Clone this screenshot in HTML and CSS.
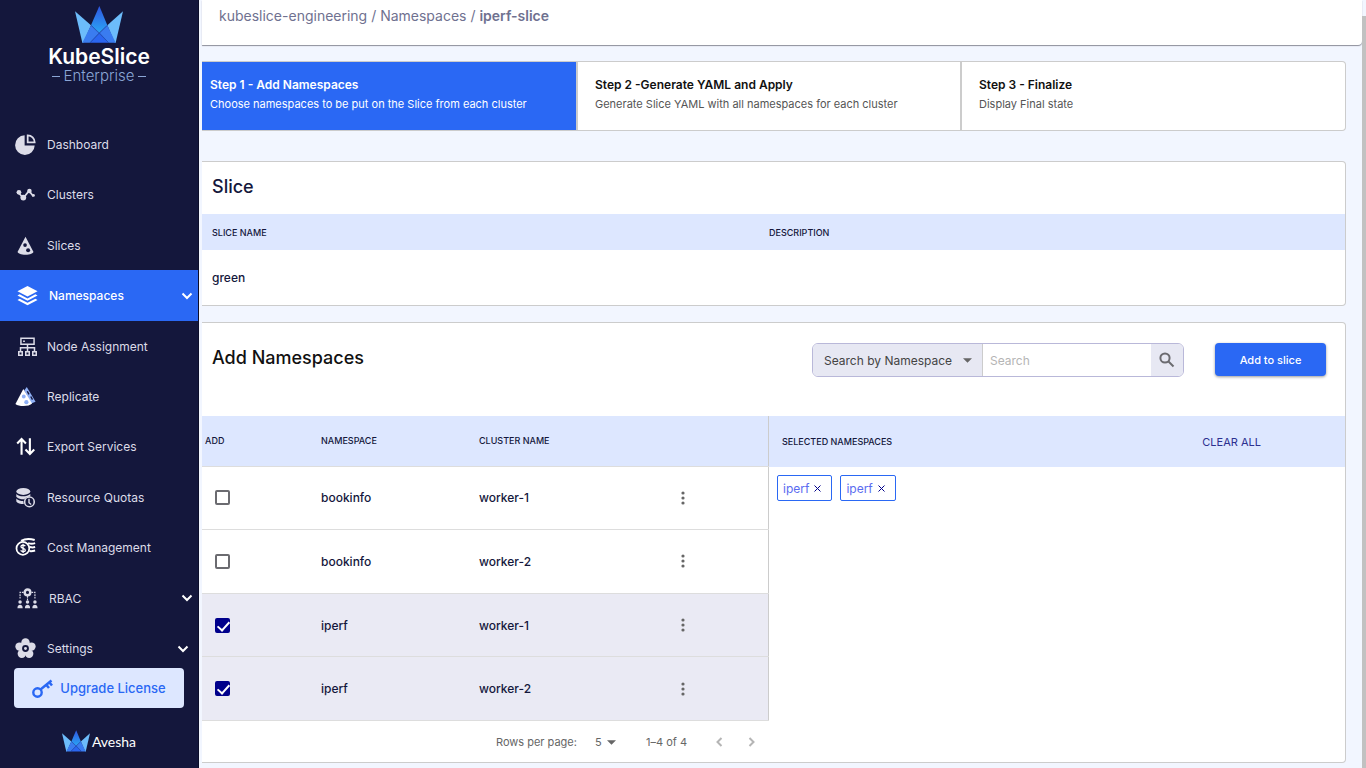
FILE: index.html
```html
<!DOCTYPE html>
<html lang="en">
<head>
    <meta charset="utf-8">
    <title>KubeSlice Enterprise - Namespaces</title>
    <link rel="stylesheet" href="styles.css">
</head>
<body>
    <!-- shared crown, used by both logos -->
    <svg class="defs" width="0" height="0" aria-hidden="true">
        <defs>
            <linearGradient id="peak" x1="0" y1="0" x2="0" y2="1">
                <stop offset="0" stop-color="#2f55e0"/>
                <stop offset="1" stop-color="#2aa5f5"/>
            </linearGradient>
            <symbol id="crown" viewBox="0 0 144 111">
                <path d="M0 16 48 58 25 110h-3z" fill="#6cbcfb"/>
                <path d="M144 16 97 58l22 52h3z" fill="#6cbcfb"/>
                <path d="M73 0 97 58 73 80 48 58z" fill="url(#peak)"/>
                <path d="M48 58 73 80 45 110H22z" fill="#3a7cf0"/>
                <path d="M97 58 73 80l28 30h21z" fill="#3a7cf0"/>
                <path d="M73 80 101 110H45z" fill="#2b66f0"/>
                <path d="M48 58 101 110M97 58 45 110" stroke="#2450b4" stroke-width="2" fill="none"/>
            </symbol>
        </defs>
    </svg>

    <aside class="sidebar">
        <div class="brand">
            <svg class="brand-crown"><use href="#crown"/></svg>
            <div class="brand-name">KubeSlice</div>
            <div class="brand-edition">Enterprise</div>
        </div>

        <nav class="nav">
            <a class="nav-item" href="#">
                <svg class="icon" viewBox="0 0 24 24"><path d="M11 1.500v11.500h11.500A11.200 11.200 0 1 1 11 1.500z" fill="#dcdce8"/><path d="M14.500 1.500v8h8a8 8 0 0 0-8-8z" fill="none" stroke="#dcdce8" stroke-width="2"/></svg>
                <span>Dashboard</span>
            </a>
            <a class="nav-item" href="#">
                <svg class="icon" viewBox="0 0 24 24"><path d="M4 10 9.500 16 16 8l5 6" fill="none" stroke="#dcdce8" stroke-width="2"/><g fill="#dcdce8"><circle cx="4.500" cy="9.500" r="2.700"/><circle cx="9.500" cy="15.500" r="3.300"/><circle cx="16.500" cy="8" r="2.600"/><circle cx="21" cy="13" r="1.700"/></g></svg>
                <span>Clusters</span>
            </a>
            <a class="nav-item" href="#">
                <svg class="icon" viewBox="0 0 24 24"><path d="M12 2 21 19c.500 1.500-4 3.500-9 3.500S2.500 20.500 3 19z" fill="#dcdce8"/><g fill="#14173c"><circle cx="11.500" cy="11.500" r="2.100"/><circle cx="15" cy="17.500" r="2.300"/></g></svg>
                <span>Slices</span>
            </a>
            <a class="nav-item has-menu active" href="#">
                <svg class="icon" viewBox="0 0 24 24" fill="#fff"><path d="M12 1 23.500 7 12 13 .500 7z"/><path d="m.500 12 2.500-1.300 9 4.700 9-4.700 2.500 1.300-11.500 6z"/><path d="m.500 17 2.500-1.300 9 4.700 9-4.700 2.500 1.300-11.500 6z"/></svg>
                <span>Namespaces</span>
                <svg class="chevron" viewBox="0 0 12 8"><path d="m1.500 1.500 4.500 4.500 4.500-4.500"/></svg>
            </a>
            <a class="nav-item wide" href="#">
                <svg class="icon" viewBox="0 0 24 24" fill="none" stroke="#dcdce8" stroke-width="1.700"><path d="M4.500 2.500h15v7h-15zM12 9.500v8M4 17.500v-4h16v4M7 6h2"/><path d="M2 18h4v4H2zM10 18h4v4h-4zM18 18h4v4h-4z"/></svg>
                <span>Node Assignment</span>
            </a>
            <a class="nav-item" href="#">
                <svg class="icon" viewBox="0 0 24 24"><path d="M13.500 1 23.500 18l-5 2-8-15z" fill="#8fb0f5"/><path d="M9.500 3.500 19.500 20c-3 3.500-15 4-19 .500z" fill="#fff"/><g fill="#8fb0f5"><circle cx="10" cy="12" r="2.200"/><circle cx="13" cy="18.500" r="2.400"/></g><path d="m14 6 2 3.500M18 12l2 3.500" stroke="#14173c" stroke-width="1.600"/></svg>
                <span>Replicate</span>
            </a>
            <a class="nav-item" href="#">
                <svg class="icon" viewBox="0 0 24 24" fill="none" stroke="#fff" stroke-width="2.400"><path d="M7.500 21.500V4M2.500 8.500l5-5 5 5M17 2.500V20M12 15.500l5 5 5-5"/></svg>
                <span>Export Services</span>
            </a>
            <a class="nav-item" href="#">
                <svg class="icon" viewBox="0 0 24 24"><g fill="#dcdce8"><ellipse cx="9.500" cy="5" rx="8" ry="4"/><path d="M1.500 8c3 3.500 12 3.500 16 0v2.500c-4 1-6 2-7 3.500-4 0-7-1-9-3zM1.500 13c2 2 5 3 8 3l.500 3.500c-4 0-7-1-8.500-3z"/></g><circle cx="16.500" cy="17" r="5.500" fill="#14173c" stroke="#dcdce8" stroke-width="1.800"/><path d="M16 13.500v4.500l2.500 2" fill="none" stroke="#dcdce8" stroke-width="1.600"/></svg>
                <span>Resource Quotas</span>
            </a>
            <a class="nav-item" href="#">
                <svg class="icon" viewBox="0 0 24 24"><g fill="none" stroke="#fff" stroke-width="2.300"><path d="M7 4.500C12 1.500 18 2 22.500 3.500M15 7c3 1 5 1 8 0M17 11.500c2 .500 4 .500 6 0M16.500 16c2.500.500 4.500 0 6.500-.500"/></g><circle cx="9" cy="13" r="7.300" fill="#14173c" stroke="#fff" stroke-width="2"/><path d="M11.800 10.500C10.500 8.800 6.800 9 6.800 11c0 2.300 5 1.500 5 4 0 2-4 2.300-5.300.300M9.200 7.800v10.500" fill="none" stroke="#fff" stroke-width="1.500"/></svg>
                <span>Cost Management</span>
            </a>
            <a class="nav-item has-menu" href="#">
                <svg class="icon" viewBox="0 0 24 24"><g fill="none" stroke="#dcdce8"><circle cx="12" cy="5" r="3.200" stroke-width="2.800"/><path d="M12 9v5M7.500 5H3.500v8M16.500 5h4v8" stroke-width="1.300" stroke-dasharray="2 1"/></g><g fill="#dcdce8"><circle cx="3.500" cy="16" r="2"/><circle cx="12" cy="16" r="2"/><circle cx="20.500" cy="16" r="2"/><path d="M.500 23c0-5 6-5 6 0zM9 23c0-5 6-5 6 0zM17.500 23c0-5 6-5 6 0z"/></g></svg>
                <span>RBAC</span>
                <svg class="chevron" viewBox="0 0 12 8"><path d="m1.500 1.500 4.500 4.500 4.500-4.500"/></svg>
            </a>
            <a class="nav-item settings" href="#">
                <svg class="icon" viewBox="0 0 24 24"><g fill="#dcdce8"><circle cx="12" cy="5" r="4.800"/><circle cx="18.800" cy="9.800" r="4.800"/><circle cx="16.200" cy="18" r="4.800"/><circle cx="7.800" cy="18" r="4.800"/><circle cx="5.200" cy="9.800" r="4.800"/><circle cx="12" cy="12" r="6"/></g><circle cx="12" cy="12" r="2.800" fill="#dcdce8" stroke="#14173c" stroke-width="2.200"/></svg>
                <span>Settings</span>
                <svg class="chevron" viewBox="0 0 12 8"><path d="m1.500 1.500 4.500 4.500 4.500-4.500"/></svg>
            </a>
        </nav>

        <button class="upgrade" type="button">
            <svg class="key" viewBox="0 0 21 19" fill="none" stroke="#2a68f4"><circle cx="5.500" cy="13.500" r="4.200" stroke-width="2.400"/><path d="M8.500 10.500 19.500 1.500" stroke-width="2.400"/><path d="m14 5.500 3 3.500M17 3l3 3.500" stroke-width="2.600"/></svg>
            Upgrade License
        </button>

        <div class="vendor">
            <svg class="vendor-crown"><use href="#crown"/></svg>
            <span>Avesha</span>
        </div>
    </aside>

    <main class="main">
        <header class="topbar">
            <a href="#">kubeslice-engineering</a> / <a href="#">Namespaces</a> / <strong>iperf-slice</strong>
        </header>

        <div class="content">
            <ol class="steps">
                <li class="step current">
                    <h3>Step 1 - Add Namespaces</h3>
                    <p>Choose namespaces to be put on the Slice from each cluster</p>
                </li>
                <li class="step">
                    <h3>Step 2 -Generate YAML and Apply</h3>
                    <p>Generate Slice YAML with all namespaces for each cluster</p>
                </li>
                <li class="step">
                    <h3>Step 3 - Finalize</h3>
                    <p>Display Final state</p>
                </li>
            </ol>

            <section class="card">
                <h2 class="slice-title">Slice</h2>
                <table class="slice-table">
                    <thead>
                        <tr><th>SLICE NAME</th><th>DESCRIPTION</th></tr>
                    </thead>
                    <tbody>
                        <tr><td>green</td><td></td></tr>
                    </tbody>
                </table>
            </section>

            <section class="card namespaces">
                <div class="toolbar">
                    <h2>Add Namespaces</h2>
                    <form class="search">
                        <div class="select-wrap">
                            <select aria-label="Search by">
                                <option>Search by Namespace</option>
                            </select>
                            <svg class="caret" viewBox="0 0 10 5"><path d="M0 0h10L5 5z"/></svg>
                        </div>
                        <input type="text" placeholder="Search" aria-label="Search">
                        <button type="button" aria-label="Search">
                            <svg viewBox="0 0 16 16"><circle cx="6" cy="6" r="4.600"/><path d="m9.500 9.500 5 5"/></svg>
                        </button>
                    </form>
                    <button class="add-btn" type="button">Add to slice</button>
                </div>

                <div class="panes">
                    <div class="pane-left">
                        <table class="ns-table">
                            <thead>
                                <tr><th class="col-add">ADD</th><th class="col-ns">NAMESPACE</th><th class="col-cluster">CLUSTER NAME</th><th></th></tr>
                            </thead>
                            <tbody>
                                <tr>
                                    <td><input type="checkbox" aria-label="bookinfo on worker-1"></td>
                                    <td>bookinfo</td>
                                    <td>worker-1</td>
                                    <td><button class="more" type="button" aria-label="More"><svg viewBox="0 0 4 14"><circle cx="2" cy="2" r="1.600"/><circle cx="2" cy="7" r="1.600"/><circle cx="2" cy="12" r="1.600"/></svg></button></td>
                                </tr>
                                <tr>
                                    <td><input type="checkbox" aria-label="bookinfo on worker-2"></td>
                                    <td>bookinfo</td>
                                    <td>worker-2</td>
                                    <td><button class="more" type="button" aria-label="More"><svg viewBox="0 0 4 14"><circle cx="2" cy="2" r="1.600"/><circle cx="2" cy="7" r="1.600"/><circle cx="2" cy="12" r="1.600"/></svg></button></td>
                                </tr>
                                <tr class="selected">
                                    <td><input type="checkbox" checked aria-label="iperf on worker-1"></td>
                                    <td>iperf</td>
                                    <td>worker-1</td>
                                    <td><button class="more" type="button" aria-label="More"><svg viewBox="0 0 4 14"><circle cx="2" cy="2" r="1.600"/><circle cx="2" cy="7" r="1.600"/><circle cx="2" cy="12" r="1.600"/></svg></button></td>
                                </tr>
                                <tr class="selected">
                                    <td><input type="checkbox" checked aria-label="iperf on worker-2"></td>
                                    <td>iperf</td>
                                    <td>worker-2</td>
                                    <td><button class="more" type="button" aria-label="More"><svg viewBox="0 0 4 14"><circle cx="2" cy="2" r="1.600"/><circle cx="2" cy="7" r="1.600"/><circle cx="2" cy="12" r="1.600"/></svg></button></td>
                                </tr>
                            </tbody>
                        </table>
                        <div class="pager">
                            <label for="rows">Rows per page:</label>
                            <div class="select-wrap">
                                <select id="rows">
                                    <option>5</option>
                                </select>
                                <svg class="caret" viewBox="0 0 10 5"><path d="M0 0h10L5 5z"/></svg>
                            </div>
                            <span>1–4 of 4</span>
                            <button type="button" aria-label="Previous page"><svg viewBox="0 0 7 10"><path d="M5.500 1 1.500 5l4 4"/></svg></button>
                            <button type="button" aria-label="Next page"><svg viewBox="0 0 7 10"><path d="m1.500 1 4 4-4 4"/></svg></button>
                        </div>
                    </div>

                    <div class="pane-right">
                        <div class="pane-head">
                            <h4>SELECTED NAMESPACES</h4>
                            <button type="button">CLEAR ALL</button>
                        </div>
                        <div class="tags">
                            <span class="tag">iperf <button type="button" aria-label="Remove iperf"><svg viewBox="0 0 7 7"><path d="m.500.500 6 6M6.500.500l-6 6"/></svg></button></span>
                            <span class="tag">iperf <button type="button" aria-label="Remove iperf"><svg viewBox="0 0 7 7"><path d="m.500.500 6 6M6.500.500l-6 6"/></svg></button></span>
                        </div>
                    </div>
                </div>
            </section>
        </div>
    </main>
    <div class="scrollbar"></div>
</body>
</html>
```
FILE: styles.css
```css
* { box-sizing: border-box; }
body { margin: 0; display: flex; height: 100vh; overflow: hidden; background: #f2f6ff; color: #14173c; font-family: Inter, Roboto, sans-serif; font-size: 12px; }
h2, h3, h4, p, ol { margin: 0; padding: 0; }
a { color: inherit; text-decoration: none; }
button, input, select { font: inherit; color: inherit; }
button { border: 0; padding: 0; background: none; cursor: pointer; }
.defs { position: absolute; }

/* sidebar */
.sidebar { flex: none; width: 199px; background: #14173c; border-right: 1px solid #0c0e2a; display: flex; flex-direction: column; }
.brand { height: 119px; padding-top: 6px; display: flex; flex-direction: column; align-items: center; }
.brand-crown { width: 48px; height: 37px; flex: none; }
.brand-name { color: #fff; font-size: 21px; font-weight: 600; line-height: 20px; margin-top: 4px; }
.brand-edition { display: flex; align-items: center; gap: 4px; color: #8ba6d6; font-size: 15px; font-weight: 300; line-height: 18px; }
.brand-edition::before, .brand-edition::after { content: ""; width: 8px; height: 1px; background: #8ba6d6; }

.nav { flex: none; height: 555px; display: grid; grid-auto-rows: 1fr; }
.nav-item { display: flex; align-items: center; gap: 11px; padding: 0 6px 0 15px; color: #dcdce8; }
.nav-item .icon { width: 21px; height: 21px; flex: none; }
.nav-item.has-menu, .nav-item.wide { padding-left: 17px; }
.nav-item.has-menu { padding-right: 5px; }
.nav-item.wide { gap: 9px; }
.nav-item.settings { padding-right: 9px; }
.nav-item.active { background: #2a68f4; color: #fff; font-weight: 500; }
.chevron { width: 12px; height: 8px; margin-left: auto; fill: none; stroke: #fff; stroke-width: 2; }

.upgrade { flex: none; height: 40px; margin: -6px 14px 0; border-radius: 4px; background: #dde7ff; color: #2a68f4; font-size: 13px; font-weight: 500; display: flex; align-items: center; justify-content: center; gap: 7px; }
.key { width: 21px; height: 19px; }
.vendor { display: flex; align-items: center; justify-content: center; gap: 2px; margin-top: 22px; color: #fff; font-family: Lato, sans-serif; font-size: 14px; }
.vendor-crown { width: 28px; height: 22px; }

/* page */
.main { flex: 1; min-width: 0; margin-left: 3px; }
.topbar { height: 45px; padding: 7px 17px; background: #fff; border-radius: 0 0 4px 0; box-shadow: 0 1px 1px #8d8f9b; color: #6f7190; font-size: 14px; line-height: 18px; }
.topbar strong { font-weight: 600; }
.content { padding: 16px 16px 0 0; }
.scrollbar { flex: none; width: 4px; margin-top: 16px; background: #c1c1c1; }

.steps { display: grid; grid-template-columns: 376fr 384fr 383fr; list-style: none; border: 1px solid #ccc; border-left: 0; border-radius: 0 4px 4px 0; background: #fff; margin-bottom: 30px; }
.step { height: 68px; padding: 14px 17px; border-right: 2px solid #ccc; }
.step:last-child { border-right: 0; }
.step h3 { font-size: 12px; font-weight: 600; line-height: 18px; color: #111; }
.step p { font-size: 11px; line-height: 20px; color: #555; }
.step.current { padding-left: 8px; background: #2a68f4; }
.step.current h3, .step.current p { color: #fff; }

.card { background: #fff; border: 1px solid #ccc; border-left: 0; border-radius: 0 4px 4px 0; margin-bottom: 16px; }
h2 { font-size: 18px; font-weight: 500; line-height: 24px; }
table { width: 100%; border-collapse: collapse; table-layout: fixed; }
th { padding: 0; text-align: left; font-size: 9px; font-weight: 500; background: #dde7ff; }
td { padding: 0; font-weight: 500; }

.slice-title { padding: 13px 10px 15px; }
.slice-table th { height: 36px; }
.slice-table td { height: 55px; }
.slice-table th:first-child, .slice-table td:first-child { width: 567px; padding-left: 10px; }

/* add namespaces */
.toolbar { display: flex; align-items: flex-start; padding: 20px 19px 39px 10px; }
.toolbar h2 { margin-right: auto; margin-top: 3px; color: #111; }
.search { display: flex; width: 372px; height: 34px; border: 1px solid #b9b8d9; border-radius: 6px; overflow: hidden; }
.search .select-wrap { width: 170px; border-right: 1px solid #ccc; background: #e7e8f3; }
.search select { width: 100%; padding-left: 11px; color: #444; }
.search input { flex: 1; min-width: 0; border: 0; padding: 0 7px; outline: 0; }
.search input::placeholder { color: #b5b5b5; opacity: 1; }
.search button { width: 32px; background: #e7e8f3; display: flex; align-items: center; justify-content: center; }
.search button svg { width: 16px; height: 16px; fill: none; stroke: #6b6b70; stroke-width: 2; }
.select-wrap { position: relative; display: flex; }
.select-wrap select { appearance: none; border: 0; background: none; outline: 0; }
.caret { position: absolute; right: 10px; top: 50%; width: 9px; height: 5px; margin-top: -2px; fill: #666; pointer-events: none; }
.add-btn { width: 111px; height: 33px; margin-left: 31px; border-radius: 4px; background: #2a68f4; color: #fff; font-size: 11px; font-weight: 500; box-shadow: 0 1px 3px rgba(0, 0, 0, .4); }

.panes { display: grid; grid-template-columns: 567fr 576fr; }
.ns-table { height: 305px; border-right: 1px solid #ccc; }
.ns-table th { height: 50px; }
.ns-table tr { border-bottom: 1px solid #ddd; }
.ns-table th:first-child { padding-left: 3px; }
.ns-table td:first-child { padding-left: 13px; }
.col-add { width: 119px; }
.col-ns { width: 158px; }
.col-cluster { width: 192px; }
.selected { background: #eaeaf4; }
input[type="checkbox"] { appearance: none; display: block; position: relative; width: 15px; height: 15px; margin: 0; border: 2px solid #6b6b70; border-radius: 2px; background: #fff; }
input[type="checkbox"]:checked { border-color: #00008b; background: #00008b; }
input[type="checkbox"]:checked::after { content: ""; position: absolute; left: 3px; top: -1px; width: 5px; height: 10px; border: solid #fff; border-width: 0 2px 2px 0; transform: rotate(42deg); }
.more { display: flex; align-items: center; justify-content: center; width: 24px; height: 24px; }
.more svg { width: 4px; height: 14px; fill: #666; }

.pager { display: flex; align-items: center; justify-content: flex-end; height: 41px; padding-right: 12px; font-size: 11px; color: #666; }
.pager .select-wrap { width: 27px; margin: 0 30px 0 12px; }
.pager select { width: 100%; padding: 0 6px; }
.pager .caret { right: 0; }
.pager button { width: 12px; height: 24px; margin-left: 20px; display: flex; align-items: center; justify-content: center; }
.pager span + button { margin-left: 26px; }
.pager button svg { width: 7px; height: 10px; fill: none; stroke: #b5b5b5; stroke-width: 2; }

.pane-head { display: flex; align-items: center; justify-content: space-between; height: 51px; padding: 0 84px 0 13px; background: #dde7ff; }
.pane-head h4 { font-size: 9px; font-weight: 500; }
.pane-head button { font-size: 11px; color: #2c3090; }
.tags { display: flex; gap: 8px; padding: 8px; }
.tag { display: flex; align-items: center; gap: 5px; height: 26px; padding: 0 10px 0 5px; border: 1px solid #2a68f4; border-radius: 2px; color: #5a6cf0; }
.tag button { display: flex; }
.tag svg { width: 7px; height: 7px; fill: none; stroke: #00008b; stroke-width: 1; }
```
